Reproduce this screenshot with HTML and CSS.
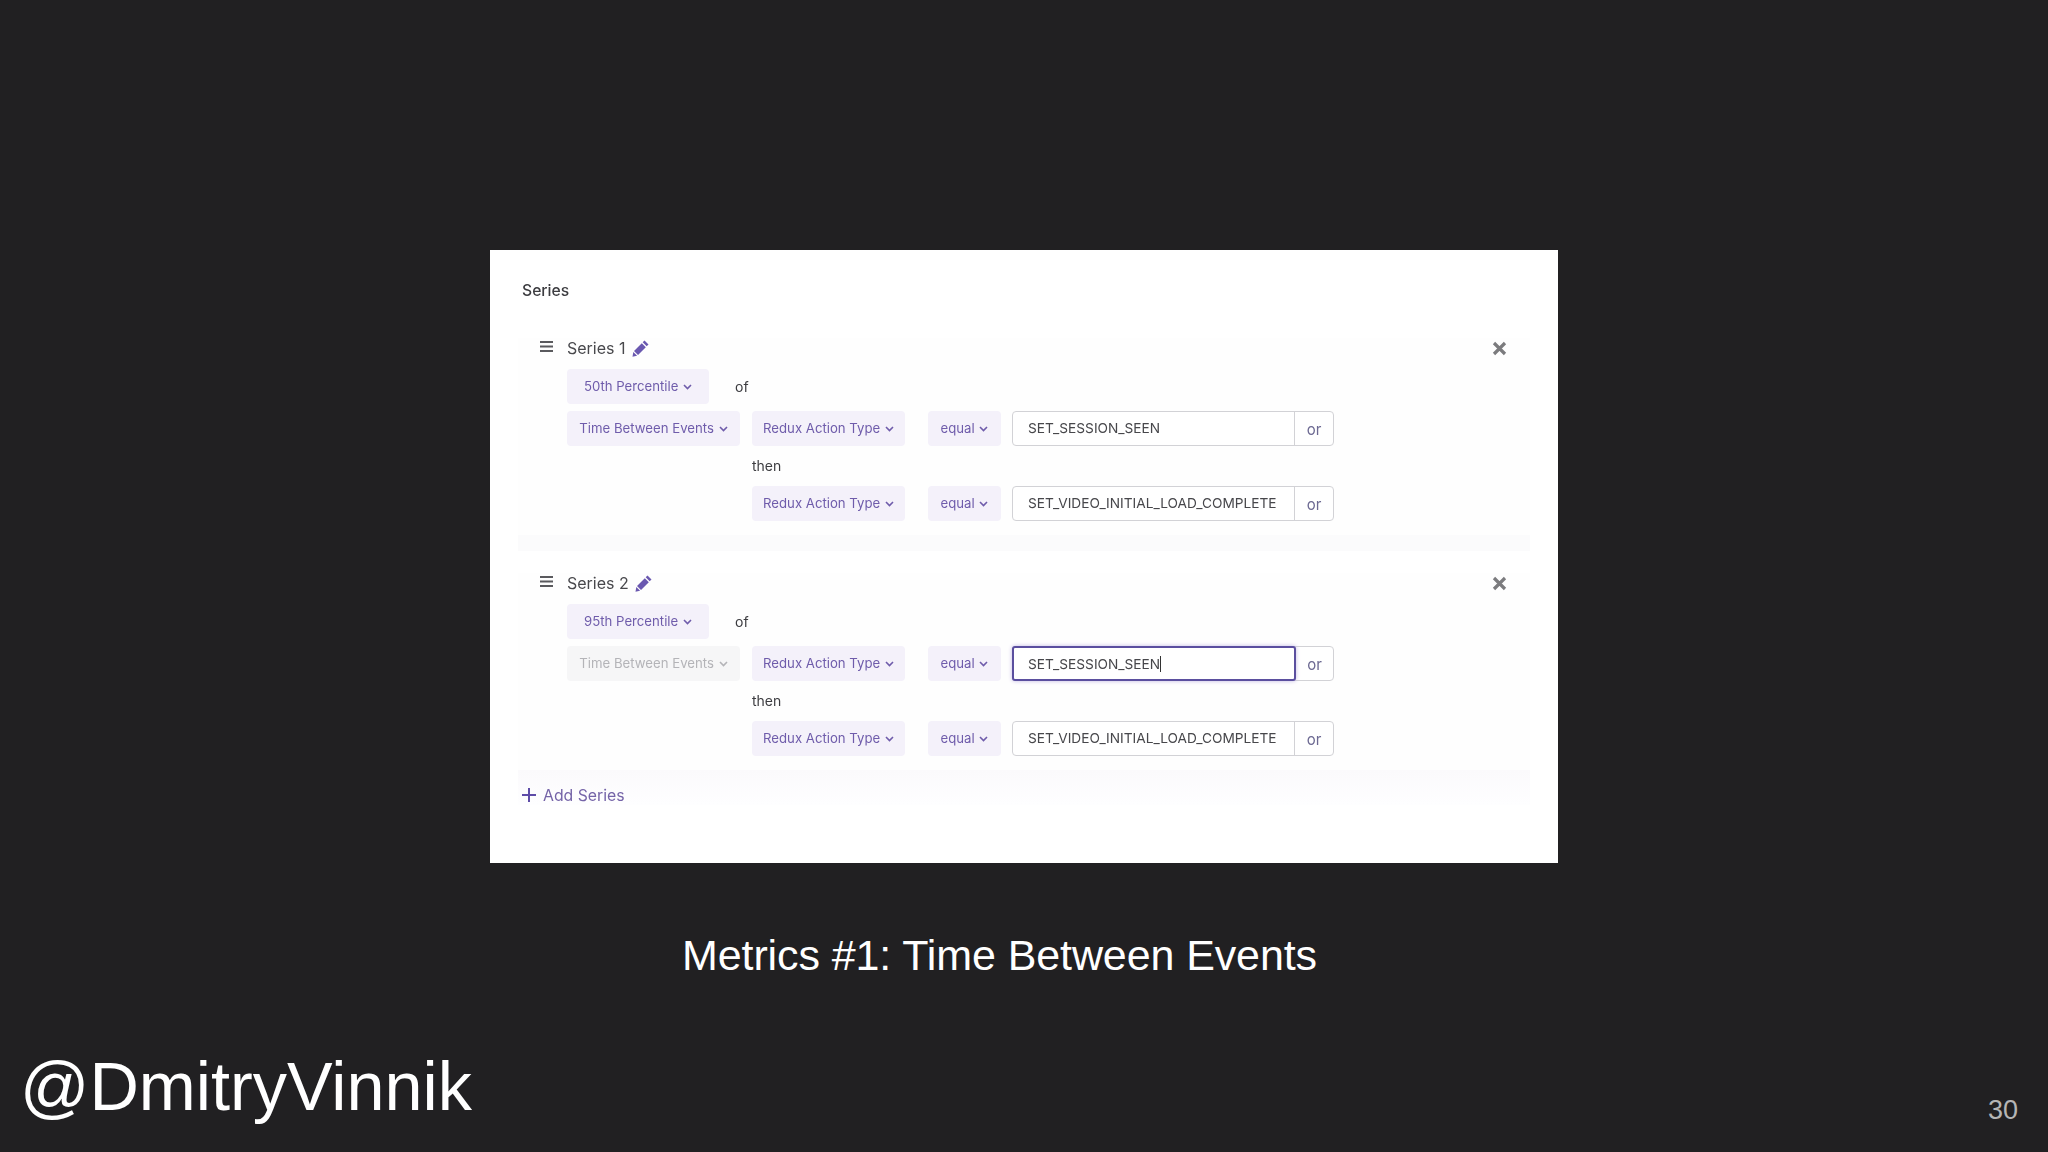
FILE: index.html
```html
<!DOCTYPE html>
<html lang="en">
<head>
    <meta charset="UTF-8">
    <title>Metrics #1: Time Between Events</title>

    <link rel="stylesheet" href="styles.css">
</head>
<body>
<div class="slide">
    <div class="panel">
        <div class="panel-title">Series</div>

        <div class="series series-first">
            <div class="series-head">
                <svg class="handle" viewBox="0 0 13 11"><path d="M0 1h13M0 5.500h13M0 10h13"/></svg>
                <span class="series-name">Series 1</span>
                <svg class="pencil" viewBox="0 0 17 17"><path d="M12.500 .5l4 4-1.800 1.800-4-4zM9.800 3.200l4 4-7.800 7.800-4-4zM1.300 11.900l3.800 3.800-4.600 1z"/></svg>
                <svg class="close" viewBox="0 0 15 15"><path d="M2 2l11 11M13 2L2 13"/></svg>
            </div>
            <div class="stat-row">
                <div class="chip chip-stat">50th Percentile <svg class="chev" viewBox="0 0 9 6"><path d="M1 1l3.500 3.500L8 1"/></svg></div>
                <span class="word">of</span>
            </div>
            <div class="query">
                <div class="chip chip-metric">Time Between Events <svg class="chev" viewBox="0 0 9 6"><path d="M1 1l3.500 3.500L8 1"/></svg></div>
                <div class="chip chip-prop">Redux Action Type <svg class="chev" viewBox="0 0 9 6"><path d="M1 1l3.500 3.500L8 1"/></svg></div>
                <div class="chip chip-op">equal <svg class="chev" viewBox="0 0 9 6"><path d="M1 1l3.500 3.500L8 1"/></svg></div>
                <div class="field">
                    <div class="field-value">SET_SESSION_SEEN</div>
                    <div class="field-or">or</div>
                </div>
                <div class="word then">then</div>
                <div class="chip chip-prop">Redux Action Type <svg class="chev" viewBox="0 0 9 6"><path d="M1 1l3.500 3.500L8 1"/></svg></div>
                <div class="chip chip-op">equal <svg class="chev" viewBox="0 0 9 6"><path d="M1 1l3.500 3.500L8 1"/></svg></div>
                <div class="field">
                    <div class="field-value">SET_VIDEO_INITIAL_LOAD_COMPLETE</div>
                    <div class="field-or">or</div>
                </div>
            </div>
        </div>

        <div class="series">
            <div class="series-head">
                <svg class="handle" viewBox="0 0 13 11"><path d="M0 1h13M0 5.500h13M0 10h13"/></svg>
                <span class="series-name">Series 2</span>
                <svg class="pencil" viewBox="0 0 17 17"><path d="M12.500 .5l4 4-1.800 1.800-4-4zM9.800 3.200l4 4-7.800 7.800-4-4zM1.300 11.900l3.800 3.800-4.600 1z"/></svg>
                <svg class="close" viewBox="0 0 15 15"><path d="M2 2l11 11M13 2L2 13"/></svg>
            </div>
            <div class="stat-row">
                <div class="chip chip-stat">95th Percentile <svg class="chev" viewBox="0 0 9 6"><path d="M1 1l3.500 3.500L8 1"/></svg></div>
                <span class="word">of</span>
            </div>
            <div class="query">
                <div class="chip chip-metric chip-off">Time Between Events <svg class="chev" viewBox="0 0 9 6"><path d="M1 1l3.500 3.500L8 1"/></svg></div>
                <div class="chip chip-prop">Redux Action Type <svg class="chev" viewBox="0 0 9 6"><path d="M1 1l3.500 3.500L8 1"/></svg></div>
                <div class="chip chip-op">equal <svg class="chev" viewBox="0 0 9 6"><path d="M1 1l3.500 3.500L8 1"/></svg></div>
                <div class="field">
                    <div class="field-value field-focus"><span class="caret">SET_SESSION_SEEN</span></div>
                    <div class="field-or">or</div>
                </div>
                <div class="word then">then</div>
                <div class="chip chip-prop">Redux Action Type <svg class="chev" viewBox="0 0 9 6"><path d="M1 1l3.500 3.500L8 1"/></svg></div>
                <div class="chip chip-op">equal <svg class="chev" viewBox="0 0 9 6"><path d="M1 1l3.500 3.500L8 1"/></svg></div>
                <div class="field">
                    <div class="field-value">SET_VIDEO_INITIAL_LOAD_COMPLETE</div>
                    <div class="field-or">or</div>
                </div>
            </div>
        </div>

        <div class="add-series">
            <svg class="plus" viewBox="0 0 14 14"><path d="M7 0v14M0 7h14"/></svg>
            <span>Add Series</span>
        </div>
    </div>

    <div class="caption">Metrics #1: Time Between Events</div>

    <div class="footer">
        <div class="handle-name">@DmitryVinnik</div>
        <div class="page-num">30</div>
    </div>
</div>
</body>
</html>
```

FILE: styles.css
```css
* {
    margin: 0;
    padding: 0;
    box-sizing: border-box;
}

body {
    background-color: #212022;
    font-family: "Liberation Sans", Arial, sans-serif;
    overflow: hidden;
}

.slide {
    width: 2048px;
    height: 1152px;
    padding-top: 250px;
    display: flex;
    flex-direction: column;
}

.panel {
    width: 1068px;
    height: 613px;
    margin-left: 490px;
    padding-top: 30px;
    background-color: #fff;
    color: #3c3c40;
    font-family: Inter, "Noto Sans", sans-serif;
    font-size: 14px;
    filter: blur(0.6px);
}

.panel-title {
    height: 20px;
    margin-left: 32px;
    line-height: 21px;
    font-size: 15.700px;
    font-weight: 500;
}

.series {
    width: 1012px;
    margin-left: 28px;
    padding: 0 0 14px 22px;
    background-color: #fefefe;
}

.series-first {
    margin-top: 38px;
    margin-bottom: 22px;
    border-bottom: 16px solid #fbfbfc;
    box-sizing: content-box;
    width: 990px;
}

.series-head {
    height: 20px;
    display: flex;
    align-items: center;
}

.handle {
    width: 13px;
    height: 11px;
    margin-right: 14px;
    margin-top: -4px;
    fill: none;
    stroke: #5a5a5e;
    stroke-width: 1.800;
}

.series-name {
    font-size: 16px;
    line-height: 20px;
    color: #48484c;
}

.pencil {
    width: 17px;
    height: 17px;
    margin-left: 6px;
    fill: #6a58b0;
}

.close {
    width: 15px;
    height: 15px;
    margin-left: auto;
    margin-right: 23px;
    fill: none;
    stroke: #7b7b7e;
    stroke-width: 3.200;
}

.stat-row {
    display: flex;
    align-items: center;
    gap: 26px;
    margin: 11px 0 7px 27px;
}

.query {
    display: grid;
    grid-template-columns: 185px 176px 84px 322px;
    grid-template-rows: 35px 40px 35px;
    margin-left: 27px;
}

.chip {
    height: 35px;
    display: flex;
    align-items: center;
    justify-content: center;
    gap: 1px;
    border-radius: 4px;
    background-color: #f4f1fa;
    color: #6f5cab;
    font-size: 13.200px;
    line-height: 33px;
    white-space: pre;
}

.chip-stat {
    width: 142px;
}

.chip-metric {
    width: 173px;
}

.chip-prop {
    width: 153px;
}

.chip-op {
    width: 73px;
}

.chip-off {
    background-color: #f6f6f7;
    color: #b4b4b8;
}

.chip-off .chev {
    stroke: #b4b4b8;
}

.chev {
    width: 9px;
    height: 6px;
    fill: none;
    stroke: #6f5cab;
    stroke-width: 1.600;
}

.word {
    color: #3c3c40;
    font-size: 14px;
}

.then {
    grid-column: 2;
    line-height: 39px;
}

.then + .chip {
    grid-column: 2;
}

.field {
    display: flex;
    width: 322px;
    height: 35px;
    border: 1px solid #d2d2d6;
    border-radius: 4px;
    background-color: #fff;
}

.field-value {
    width: 282px;
    padding-left: 15px;
    border-right: 1px solid #d2d2d6;
    line-height: 33px;
    color: #47474b;
    font-size: 13.700px;
    white-space: pre;
}

.field-focus {
    margin: -1px 0 -1px -1px;
    height: 35px;
    width: 284px;
    border: 2px solid #5b4f9f;
    border-radius: 3px;
    box-shadow: 0 0 4px #c3b9e4;
    padding-left: 14px;
    background-color: #fff;
}

.caret {
    border-right: 1px solid #333;
}

.field-or {
    flex: 1;
    text-align: center;
    line-height: 35px;
    color: #6c6992;
    font-size: 15px;
}

.add-series {
    width: 1012px;
    height: 35px;
    margin-left: 28px;
    padding: 15px 0 0 4px;
    display: flex;
    align-items: center;
    gap: 7px;
    background-image: linear-gradient(#fbfafc, #fefeff);
    color: #7564a8;
    font-size: 15.800px;
}

.plus {
    width: 14px;
    height: 14px;
    fill: none;
    stroke: #5e4ca8;
    stroke-width: 2;
}

.caption {
    margin: 67px 0 0 682px;
    color: #fff;
    font-size: 43px;
    letter-spacing: -0.1px;
    line-height: 50px;
    white-space: pre;
}

.footer {
    margin-top: auto;
    padding: 0 30px 26px 20px;
    display: flex;
    align-items: flex-end;
    justify-content: space-between;
}

.handle-name {
    color: #fff;
    font-size: 68.400px;
    line-height: 79px;
}

.page-num {
    color: #b5b5b5;
    font-size: 27px;
    line-height: 31px;
}
```
